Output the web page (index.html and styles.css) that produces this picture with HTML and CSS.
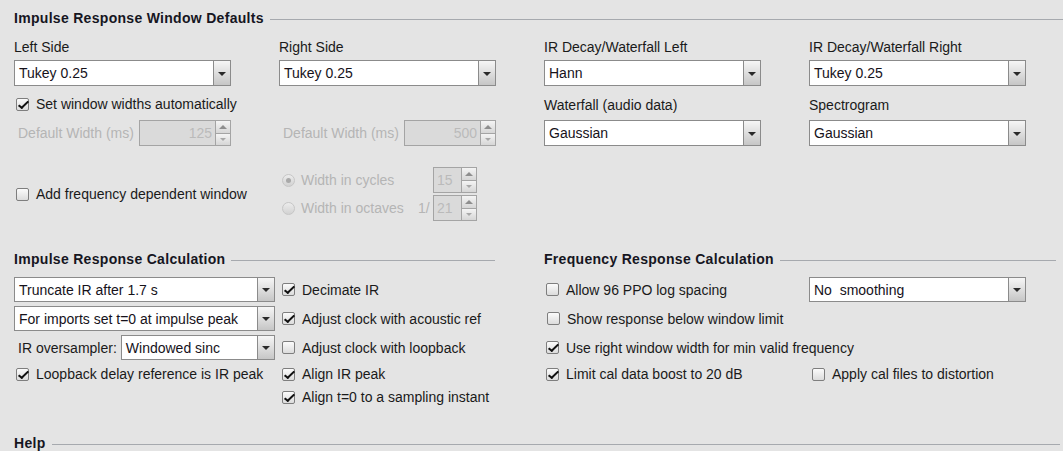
FILE: index.html
```html
<!DOCTYPE html>
<html>
<head>
<meta charset="utf-8">
<link rel="stylesheet" href="styles.css">
</head>
<body>
<div class="page">
  <div class="title t1"><span class="ttext">Impulse Response Window Defaults</span><i class="rule"></i></div>
  <div class="grid4">
    <div class="lbl r1 c1">Left Side</div>
    <div class="lbl r1 c2">Right Side</div>
    <div class="lbl r1 c3">IR Decay/Waterfall Left</div>
    <div class="lbl r1 c4">IR Decay/Waterfall Right</div>

    <div class="combo r2 c1"><span class="val">Tukey 0.25</span><span class="btn"><i class="tri"></i></span></div>
    <div class="combo r2 c2"><span class="val">Tukey 0.25</span><span class="btn"><i class="tri"></i></span></div>
    <div class="combo r2 c3"><span class="val">Hann</span><span class="btn"><i class="tri"></i></span></div>
    <div class="combo r2 c4"><span class="val">Tukey 0.25</span><span class="btn"><i class="tri"></i></span></div>

    <label class="check r3 c1 span2"><span class="box on"></span>Set window widths automatically</label>
    <div class="lbl r3 c3 lbl2">Waterfall (audio data)</div>
    <div class="lbl r3 c4 lbl2">Spectrogram</div>

    <div class="spinrow r4 c1"><span class="dis">Default Width (ms)</span><div class="spin"><span class="sval">125</span><span class="sbtns"><i class="up"></i><i class="dn"></i></span></div></div>
    <div class="spinrow r4 c2"><span class="dis">Default Width (ms)</span><div class="spin"><span class="sval">500</span><span class="sbtns"><i class="up"></i><i class="dn"></i></span></div></div>
    <div class="combo r4 c3"><span class="val">Gaussian</span><span class="btn"><i class="tri"></i></span></div>
    <div class="combo r4 c4"><span class="val">Gaussian</span><span class="btn"><i class="tri"></i></span></div>

    <div class="fdw r5 c1"><label class="check"><span class="box"></span>Add frequency dependent window</label></div>
    <div class="radios r5 c2">
      <div class="radio"><span class="rd sel"></span>Width in cycles</div>
      <div></div>
      <div class="spin small"><span class="sval left">15</span><span class="sbtns"><i class="up"></i><i class="dn"></i></span></div>
      <div class="radio"><span class="rd"></span>Width in octaves</div>
      <div class="frac">1/</div>
      <div class="spin small"><span class="sval left">21</span><span class="sbtns"><i class="up"></i><i class="dn"></i></span></div>
    </div>
  </div>

  <div class="halves">
    <div class="half left">
      <div class="title"><span class="ttext">Impulse Response Calculation</span><i class="rule"></i></div>
      <div class="grid2 gl">
        <div class="combo sm"><span class="val">Truncate IR after 1.7 s</span><span class="btn"><i class="tri"></i></span></div>
        <label class="check"><span class="box on"></span>Decimate IR</label>
        <div class="combo sm"><span class="val">For imports set t=0 at impulse peak</span><span class="btn"><i class="tri"></i></span></div>
        <label class="check"><span class="box on"></span>Adjust clock with acoustic ref</label>
        <div class="ovs"><span class="ovl">IR oversampler:</span><div class="combo sm grow"><span class="val">Windowed sinc</span><span class="btn"><i class="tri"></i></span></div></div>
        <label class="check"><span class="box"></span>Adjust clock with loopback</label>
        <label class="check"><span class="box on"></span>Loopback delay reference is IR peak</label>
        <label class="check"><span class="box on"></span>Align IR peak</label>
        <div></div>
        <label class="check"><span class="box on"></span>Align t=0 to a sampling instant</label>
      </div>
    </div>
    <div class="half right">
      <div class="title"><span class="ttext">Frequency Response Calculation</span><i class="rule"></i></div>
      <div class="grid2 gr">
        <label class="check"><span class="box"></span>Allow 96 PPO log spacing</label>
        <div class="combo sm"><span class="val">No&nbsp; smoothing</span><span class="btn"><i class="tri"></i></span></div>
        <label class="check wide"><span class="box"></span>Show response below window limit</label>
        <label class="check wide"><span class="box on"></span>Use right window width for min valid frequency</label>
        <label class="check"><span class="box on"></span>Limit cal data boost to 20 dB</label>
        <label class="check"><span class="box"></span>Apply cal files to distortion</label>
      </div>
    </div>
  </div>

  <div class="title help"><span class="ttext">Help</span><i class="rule"></i></div>
</div>
</body>
</html>
```
FILE: styles.css
```css
html, body {
  margin: 0;
  padding: 0;
}
body {
  width: 1063px;
  height: 451px;
  overflow: hidden;
  background: #e4e4e4;
  font-family: "Liberation Sans", Arial, sans-serif;
  font-size: 14px;
  color: #1a1a1a;
}
.page {
  padding: 8px 0 0 14px;
}
.title {
  display: flex;
  align-items: center;
  height: 20px;
}
.ttext {
  font-weight: bold;
  letter-spacing: 0.3px;
  color: #16161f;
  white-space: nowrap;
}
.rule {
  flex: 1;
  height: 1px;
  background: #a6a9ae;
  margin-left: 6px;
  margin-top: 2px;
}
.grid4 {
  display: grid;
  grid-template-columns: 217px 217px 217px 217px;
  column-gap: 48px;
  grid-template-rows: 24px 26px 34px 26px auto;
  margin-top: 8px;
}
.r1 { grid-row: 1; }
.r2 { grid-row: 2; }
.r3 { grid-row: 3; }
.r4 { grid-row: 4; }
.r5 { grid-row: 5; }
.c1 { grid-column: 1; }
.c2 { grid-column: 2; }
.c3 { grid-column: 3; }
.c4 { grid-column: 4; }
.span2 { grid-column: 1 / span 2; }
.lbl {
  line-height: 20px;
  padding-top: 1px;
  white-space: nowrap;
}
.lbl2 {
  margin-top: 8px;
}
.r3.check {
  margin-top: 8px;
  height: 20px;
}

/* combo box */
.combo {
  display: flex;
  height: 26px;
  box-sizing: border-box;
  border: 1px solid #8b8b8b;
  background: #fff;
}
.combo.sm {
  height: 25px;
}
.val {
  flex: 1;
  padding-left: 4px;
  padding-top: 1px;
  line-height: 23px;
  white-space: nowrap;
  overflow: hidden;
  color: #16121a;
}
.combo.sm .val {
  line-height: 22px;
}
.btn {
  width: 16px;
  border-left: 1px solid #8b8b8b;
  background: linear-gradient(#f6f6f6, #c6c6c6);
  display: flex;
  align-items: center;
  justify-content: center;
}
.tri {
  width: 0;
  height: 0;
  border-left: 4px solid transparent;
  border-right: 4px solid transparent;
  border-top: 4px solid #2a2a2a;
  margin-top: 1px;
}

/* checkbox */
.check {
  display: flex;
  align-items: center;
  white-space: nowrap;
}
.box {
  width: 13px;
  height: 13px;
  box-sizing: border-box;
  border: 1px solid #7e7e7e;
  border-radius: 2px;
  background: linear-gradient(#fbfbfb, #dcdcdc);
  margin: 0 7px 0 2px;
  position: relative;
  flex: none;
}
.box.on::after {
  content: "";
  position: absolute;
  left: 4px;
  top: 0px;
  width: 3px;
  height: 8px;
  border-right: 2px solid #111;
  border-bottom: 2px solid #111;
  transform: rotate(38deg) skewX(-8deg);
}

/* spinner */
.spinrow {
  display: flex;
  align-items: center;
  justify-content: space-between;
  padding-left: 4px;
}
.dis {
  color: #b5b5b5;
  white-space: nowrap;
}
.spin {
  display: flex;
  width: 92px;
  height: 26px;
  box-sizing: border-box;
  border: 1px solid #a4a4a4;
  background: #dadada;
}
.spin.small {
  width: 44px;
}
.sval {
  flex: 1;
  text-align: right;
  padding-right: 3px;
  line-height: 24px;
  color: #bababa;
}
.sval.left {
  text-align: left;
  padding-left: 3px;
  padding-right: 0;
}
.sbtns {
  width: 14px;
  border-left: 1px solid #a4a4a4;
  display: flex;
  flex-direction: column;
}
.sbtns i {
  flex: 1;
  display: flex;
  align-items: center;
  justify-content: center;
  background: linear-gradient(#f4f4f4, #d6d6d6);
}
.sbtns i.up {
  border-bottom: 1px solid #a4a4a4;
}
.sbtns i.up::before {
  content: "";
  border-left: 4px solid transparent;
  border-right: 4px solid transparent;
  border-bottom: 4px solid #8e8e8e;
}
.sbtns i.dn::before {
  content: "";
  border-left: 3px solid transparent;
  border-right: 3px solid transparent;
  border-top: 3px solid #a8a8a8;
}

/* frequency dependent window */
.fdw {
  margin-top: 21px;
  display: flex;
  align-items: center;
}
.radios {
  margin-top: 21px;
  display: grid;
  grid-template-columns: 139px 15px 44px;
  grid-template-rows: 26px 26px;
  row-gap: 2px;
}
.radio {
  display: flex;
  align-items: center;
  color: #b5b5b5;
  white-space: nowrap;
  padding-left: 3px;
}
.rd {
  width: 13px;
  height: 13px;
  box-sizing: border-box;
  border: 1px solid #c6c6c6;
  border-radius: 50%;
  background: linear-gradient(#ececec, #d2d2d2);
  margin-right: 6px;
  display: flex;
  align-items: center;
  justify-content: center;
}
.rd.sel::after {
  content: "";
  width: 5px;
  height: 5px;
  border-radius: 50%;
  background: #a9a9a9;
}
.frac {
  color: #b5b5b5;
  line-height: 26px;
}

/* second section */
.halves {
  display: flex;
  gap: 49px;
  margin-top: 28px;
}
.half.left {
  width: 481px;
}
.half.right {
  width: 512px;
}
.grid2 {
  display: grid;
  grid-template-rows: 25px 25px 25px 20px 18px;
  row-gap: 4px;
  margin-top: 8px;
}
.gl {
  grid-template-columns: 261px 1fr;
  column-gap: 5px;
}
.gr {
  grid-template-columns: 265px 217px;
}
.gr .wide {
  grid-column: 1 / span 2;
}
.gr .combo + .check,
.gr .check + .check:last-child {
  padding-left: 1px;
}
.ovs {
  display: flex;
  align-items: center;
  padding-left: 4px;
}
.ovl {
  white-space: nowrap;
  margin-right: 4px;
}
.grow {
  flex: 1;
}
.help {
  margin-top: 27px;
  width: 1046px;
}
```
